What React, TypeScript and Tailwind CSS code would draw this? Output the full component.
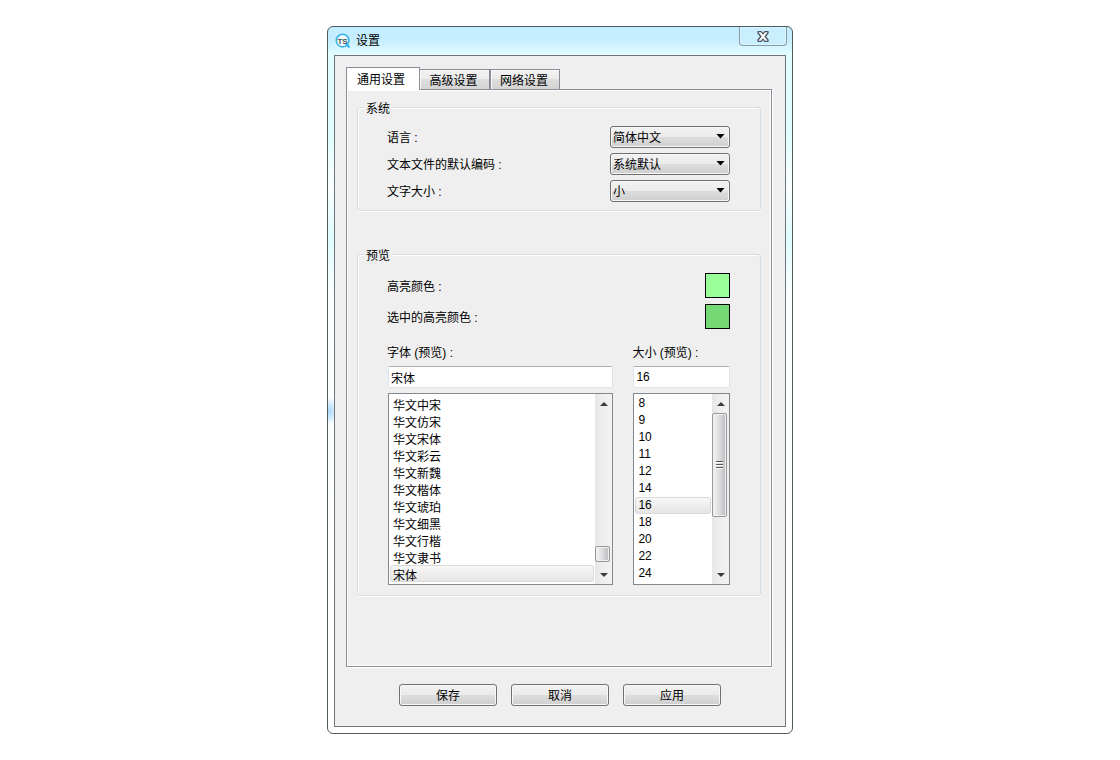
import { useState } from 'react';
import type { ReactNode } from 'react';

const TABS = ['通用设置', '高级设置', '网络设置'];

const FONTS = [
  '华文中宋',
  '华文仿宋',
  '华文宋体',
  '华文彩云',
  '华文新魏',
  '华文楷体',
  '华文琥珀',
  '华文细黑',
  '华文行楷',
  '华文隶书',
  '宋体',
];

const SIZES = ['8', '9', '10', '11', '12', '14', '16', '18', '20', '22', '24'];

function AppLogo() {
  return (
    <svg viewBox="0 0 16 16" className="size-4 shrink-0" aria-hidden="true">
      <circle cx="7.6" cy="7.6" r="6.3" fill="#f4fcff" stroke="#35b4ea" strokeWidth="1.6" />
      <path d="M11.6 11.6 L13.8 13.8" stroke="#35b4ea" strokeWidth="2.2" strokeLinecap="round" />
      <text
        x="7.6"
        y="10.5"
        fontSize="8"
        fontWeight="bold"
        textAnchor="middle"
        fontFamily="Liberation Sans, sans-serif"
        fill="#44525c"
      >
        TS
      </text>
    </svg>
  );
}

function CloseIcon() {
  return (
    <svg viewBox="0 0 12 11" className="h-[11px] w-3" aria-hidden="true">
      <path
        d="M1 0.7 H4.2 L6 2.8 L7.8 0.7 H11 V2 L8.2 5.5 L11 9 V10.3 H7.8 L6 8.2 L4.2 10.3 H1 V9 L3.8 5.5 L1 2 Z"
        fill="#fbfdfe"
        stroke="#4c5561"
        strokeWidth="1.3"
        strokeLinejoin="round"
      />
    </svg>
  );
}

function GroupBox({ title, children }: { title: string; children: ReactNode }) {
  return (
    <fieldset className="rounded-[3px] border border-[#d3dde5] shadow-[inset_1px_1px_0_#fff,0_1px_0_#fff]">
      <legend className="ml-[6px] h-[15px] bg-[#efefef] px-[2px] leading-[18px]">{title}</legend>
      {children}
    </fieldset>
  );
}

interface SelectRowProps {
  id: string;
  label: string;
  options: string[];
}

function SelectRow({ id, label, options }: SelectRowProps) {
  return (
    <div className="flex items-center justify-between">
      <label htmlFor={id} className="pt-[2px]">
        {label} :
      </label>
      <div className="relative w-[120px]">
        <select
          id={id}
          className="h-[22px] w-full appearance-none rounded-[3px] border border-[#707070] bg-[linear-gradient(to_bottom,#f2f2f2_0,#ebebeb_49%,#dddddd_50%,#cfcfcf_100%)] pt-[2px] pl-[2px] text-black shadow-[inset_0_0_0_1px_#f8f8f8]"
        >
          {options.map((option) => (
            <option key={option}>{option}</option>
          ))}
        </select>
        <svg
          viewBox="0 0 9 5"
          className="pointer-events-none absolute top-2 right-[5px] h-[5px] w-[9px]"
          aria-hidden="true"
        >
          <path d="M0.5 0 H8.5 L4.5 4.5 Z" fill="#000" />
        </svg>
      </div>
    </div>
  );
}

interface ColorRowProps {
  id: string;
  label: string;
  color: string;
  onChange: (value: string) => void;
}

function ColorRow({ id, label, color, onChange }: ColorRowProps) {
  return (
    <div className="flex items-center justify-between">
      <label htmlFor={id} className="pt-[2px]">
        {label} :
      </label>
      <input
        id={id}
        type="color"
        value={color}
        onChange={(e) => onChange(e.target.value)}
        className="size-[25px] appearance-none border border-black p-0 [&::-webkit-color-swatch]:rounded-none [&::-webkit-color-swatch]:border-0 [&::-webkit-color-swatch-wrapper]:p-0"
      />
    </div>
  );
}

function ScrollArrow({ up }: { up?: boolean }) {
  return (
    <span className="flex h-[17px] items-center justify-center">
      <svg viewBox="0 0 8 4" className="h-1 w-2" aria-hidden="true">
        <path d={up ? 'M0 4 L4 0 L8 4 Z' : 'M0 0 L4 4 L8 0 Z'} fill="#3c3c3c" />
      </svg>
    </span>
  );
}

interface ListBoxProps {
  id: string;
  label: string;
  items: string[];
  value: string;
  onChange: (value: string) => void;
  thumb: ReactNode;
}

function ListBox({ id, label, items, value, onChange, thumb }: ListBoxProps) {
  return (
    <div className="flex flex-col">
      <label htmlFor={id} className="-ml-px h-4 leading-4">
        {label} :
      </label>
      <input
        id={id}
        type="text"
        value={value}
        onChange={(e) => onChange(e.target.value)}
        className="mt-[5px] h-[22px] w-full rounded-[2px] border border-[#dbe3ec] border-t-[#abadb3] bg-white px-[2px] outline-none"
      />
      <div className="mt-[5px] flex h-48 border border-[#828790] bg-white">
        <select
          size={items.length}
          aria-label={label}
          value={value}
          onChange={(e) => onChange(e.target.value)}
          className="min-w-0 flex-1 appearance-none overflow-hidden bg-white px-px pt-px pb-[2px] outline-none"
        >
          {items.map((item) => (
            <option
              key={item}
              value={item}
              className="block h-[17px] min-h-0 rounded-[3px] border border-transparent px-[2px] py-0 leading-[15px] text-black checked:border-[#d9d9d9] checked:bg-linear-to-b checked:from-[#f8f8f8] checked:to-[#e5e5e5]"
            >
              {item}
            </option>
          ))}
        </select>
        <div
          className="flex w-[17px] flex-col bg-linear-to-r from-[#e6e6e6] via-[#efefef] to-[#f2f2f2] py-px"
          aria-hidden="true"
        >
          <ScrollArrow up />
          {thumb}
          <ScrollArrow />
        </div>
      </div>
    </div>
  );
}

const THUMB =
  'mr-[2px] flex flex-col items-center justify-center gap-px rounded-[2px] border border-[#979797] bg-linear-to-r from-[#f5f5f5] via-[#dcdcde] to-[#b9babf] shadow-[inset_0_0_0_1px_#f0f0f0]';

export default function App() {
  const [tab, setTab] = useState(0);
  const [font, setFont] = useState('宋体');
  const [size, setSize] = useState('16');
  const [highlight, setHighlight] = useState('#99ff99');
  const [selected, setSelected] = useState('#75d975');

  return (
    <div className="flex min-h-screen items-center justify-center bg-white font-['Liberation_Sans','Noto_Sans_CJK_SC',sans-serif] text-xs text-black">
      <div
        role="dialog"
        aria-labelledby="settings-title"
        className="w-full max-w-[466px] rounded-[6px] border border-[#4f5b60] bg-[radial-gradient(14px_14px_at_0_384px,#a5d8fb,transparent),linear-gradient(to_bottom,#c4edff_0,#c4edff_12px,#e2fdff_28px,#e2fdff_110px,#fbfeff_160px,#dffcff_210px,#fdfeff_270px,#ffffff_100%)] px-[6px] pb-[6px]"
      >
        <header className="-mr-px flex h-7 items-start justify-between">
          <div className="flex h-7 items-center gap-[5px] pl-px">
            <AppLogo />
            <h1 id="settings-title">设置</h1>
          </div>
          <button
            type="button"
            aria-label="关闭"
            className="flex h-[19px] w-12 items-center justify-center rounded-b-[4px] border border-t-0 border-[#8a9ba5] bg-[#c9effe] shadow-[inset_0_0_0_1px_#d9f5ff]"
          >
            <CloseIcon />
          </button>
        </header>

        <main className="border border-[#6e7679] bg-[#efefef] pt-[11px] pr-[13px] pb-5 pl-[11px]">
          <div role="tablist" className="relative flex items-end">
            {TABS.map((name, i) => (
              <button
                key={name}
                type="button"
                role="tab"
                aria-selected={tab === i}
                onClick={() => setTab(i)}
                className={
                  tab === i
                    ? '-mb-px h-[23px] w-[74px] border border-b-0 border-[#8b8c98] bg-white pt-px pr-1'
                    : 'h-[20px] w-[70px] border border-b-0 border-[#8b8c98] bg-[linear-gradient(to_bottom,#f2f2f2_0,#ebebeb_49%,#dddddd_50%,#d4d4d4_100%)] pt-[2px] pr-[2px] shadow-[inset_1px_1px_0_#fafafa] nth-2:border-l-0'
                }
              >
                {name}
              </button>
            ))}
          </div>

          <div
            role="tabpanel"
            className="flex flex-col gap-9 border border-[#8b8c98] px-[10px] pt-[10px] pb-[70px] shadow-[inset_0_0_0_1px_#fff,1px_1px_0_#fff]"
          >
            <GroupBox title="系统">
              <div className="flex flex-col gap-[5px] pt-[11px] pr-[30px] pb-2 pl-[29px]">
                <SelectRow id="language" label="语言" options={['简体中文', '繁體中文', 'English']} />
                <SelectRow id="encoding" label="文本文件的默认编码" options={['系统默认', 'UTF-8', 'GBK']} />
                <SelectRow id="text-size" label="文字大小" options={['小', '中', '大']} />
              </div>
            </GroupBox>

            <GroupBox title="预览">
              <div className="flex flex-col gap-[6px] pt-[11px] pr-[30px] pl-[29px]">
                <ColorRow id="highlight" label="高亮颜色" color={highlight} onChange={setHighlight} />
                <ColorRow id="selected" label="选中的高亮颜色" color={selected} onChange={setSelected} />
              </div>
              <div className="grid grid-cols-[7fr_3fr] gap-5 px-[30px] pt-4 pb-[10px]">
                <ListBox
                  id="font"
                  label="字体 (预览)"
                  items={FONTS}
                  value={font}
                  onChange={setFont}
                  thumb={<span className={`${THUMB} mt-auto mb-1 h-4`} />}
                />
                <ListBox
                  id="size"
                  label="大小 (预览)"
                  items={SIZES}
                  value={size}
                  onChange={setSize}
                  thumb={
                    <span className={`${THUMB} mt-px mb-auto h-[104px]`}>
                      <i className="h-[2px] w-[7px] border-t border-[#555] bg-white" />
                      <i className="h-[2px] w-[7px] border-t border-[#555] bg-white" />
                      <i className="h-[2px] w-[7px] border-t border-[#555] bg-white" />
                    </span>
                  }
                />
              </div>
            </GroupBox>
          </div>

          <footer className="flex justify-center gap-[14px] pt-[17px] pl-[2px]">
            {['保存', '取消', '应用'].map((text) => (
              <button
                key={text}
                type="button"
                className="h-[22px] w-[98px] rounded-[3px] border border-[#707070] bg-[linear-gradient(to_bottom,#f2f2f2_0,#ebebeb_49%,#dddddd_50%,#cfcfcf_100%)] pt-[2px] shadow-[inset_0_0_0_1px_#f8f8f8]"
              >
                {text}
              </button>
            ))}
          </footer>
        </main>
      </div>
    </div>
  );
}
